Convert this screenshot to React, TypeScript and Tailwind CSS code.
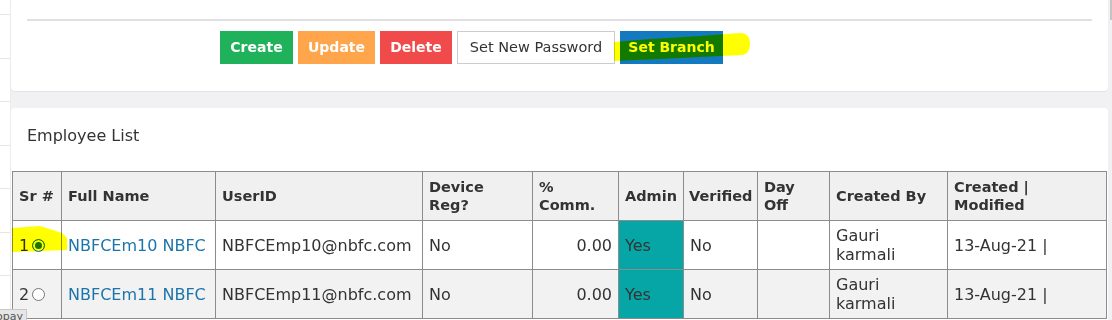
import React from 'react';

type Employee = {
  sr: number;
  fullName: string;
  userId: string;
  deviceReg: string;
  comm: string;
  admin: string;
  verified: string;
  dayOff: string;
  createdBy: [string, string];
  created: string;
};

const employees: Employee[] = [
  {
    sr: 1,
    fullName: 'NBFCEm10 NBFC',
    userId: 'NBFCEmp10@nbfc.com',
    deviceReg: 'No',
    comm: '0.00',
    admin: 'Yes',
    verified: 'No',
    dayOff: '',
    createdBy: ['Gauri', 'karmali'],
    created: '13-Aug-21 |',
  },
  {
    sr: 2,
    fullName: 'NBFCEm11 NBFC',
    userId: 'NBFCEmp11@nbfc.com',
    deviceReg: 'No',
    comm: '0.00',
    admin: 'Yes',
    verified: 'No',
    dayOff: '',
    createdBy: ['Gauri', 'karmali'],
    created: '13-Aug-21 |',
  },
];

const th = 'border border-[#8c8c8c] bg-[#f0f0f0] px-[6px] text-left align-middle font-bold text-[14.5px] leading-[18px] text-[#333]';
const td = 'border border-[#8c8c8c] px-[6px] align-middle text-[16px] leading-[19px]';

function ActionButtons() {
  return (
    <div className="ml-[193px] mt-[10px] flex gap-[5px]">
      <button className="h-[33px] w-[73px] bg-[#1fb25a] text-[14px] font-bold text-white">Create</button>
      <button className="h-[33px] w-[77px] bg-[#ffa64d] text-[14px] font-bold text-white">Update</button>
      <button className="h-[33px] w-[72px] bg-[#f04a4a] text-[14px] font-bold text-white">Delete</button>
      <button className="h-[33px] w-[158px] border border-[#cccccc] bg-white text-[14.5px] text-[#333]">
        Set New Password
      </button>
      <button className="h-[33px] w-[103px] bg-[#137abf] text-[14px] font-bold text-white">Set Branch</button>
    </div>
  );
}

function EmployeeTable() {
  return (
    <table className="ml-[1px] w-[1094px] table-fixed border-collapse">
      <colgroup>
        <col className="w-[49px]" />
        <col className="w-[154px]" />
        <col className="w-[207px]" />
        <col className="w-[110px]" />
        <col className="w-[86px]" />
        <col className="w-[65px]" />
        <col className="w-[74px]" />
        <col className="w-[72px]" />
        <col className="w-[118px]" />
        <col className="w-[159px]" />
      </colgroup>
      <thead>
        <tr className="h-[49px]">
          <th className={th}>Sr #</th>
          <th className={th}>Full Name</th>
          <th className={th}>UserID</th>
          <th className={th}>
            Device
            <br />
            Reg?
          </th>
          <th className={th}>
            %
            <br />
            Comm.
          </th>
          <th className={`${th} whitespace-nowrap`}>Admin</th>
          <th className={`${th} whitespace-nowrap !px-[5px]`}>Verified</th>
          <th className={th}>
            Day
            <br />
            Off
          </th>
          <th className={th}>Created By</th>
          <th className={th}>
            Created |
            <br />
            Modified
          </th>
        </tr>
      </thead>
      <tbody>
        {employees.map((emp, i) => (
          <tr key={emp.sr} className={`h-[49px] ${i % 2 === 1 ? 'bg-[#f2f2f2]' : 'bg-white'}`}>
            <td className={td}>
              <div className="flex items-center">
                <span>{emp.sr}</span>
                <input
                  type="radio"
                  name="emp"
                  defaultChecked={i === 0}
                  className="m-0 ml-[3px] h-[13px] w-[13px] appearance-none rounded-full border border-[#767676] bg-white checked:border-[#1a73e8] checked:bg-[#1a73e8] checked:shadow-[inset_0_0_0_2px_#ffffff]"
                />
              </div>
            </td>
            <td className={`${td} text-[#1b75ab]`}>{emp.fullName}</td>
            <td className={td}>{emp.userId}</td>
            <td className={td}>{emp.deviceReg}</td>
            <td className={`${td} text-right`}>{emp.comm}</td>
            <td className={`${td} bg-[#06a6a6]`}>{emp.admin}</td>
            <td className={td}>{emp.verified}</td>
            <td className={td}>{emp.dayOff}</td>
            <td className={td}>
              {emp.createdBy[0]}
              <br />
              {emp.createdBy[1]}
            </td>
            <td className={td}>{emp.created}</td>
          </tr>
        ))}
      </tbody>
    </table>
  );
}

export default function App() {
  return (
    <div className="relative flex h-[320px] w-[1112px] overflow-hidden bg-white font-['DejaVu_Sans',sans-serif] text-[#333]">
      {/* sidebar peeking in from the left */}
      <div className="flex w-[11px] flex-col border-r border-[#ececec]">
        <div className="h-[16px] border-b border-[#e6e6e6]" />
        {[0, 1, 2, 3, 4, 5, 6].map((n) => (
          <div key={n} className="h-[45px] border-b border-[#e6e6e6]" />
        ))}
      </div>

      <div className="flex flex-1 flex-col bg-[#f1f1f3] pr-[4px]">
        <div className="rounded-b-[4px] bg-white px-[16px] pb-[27px] pt-[19px] shadow-[0_1px_1px_rgba(0,0,0,0.06)]">
          <div className="h-[2px] bg-[#e0e0e2]" />
          <ActionButtons />
        </div>

        <div className="mt-[17px] flex-1 rounded-t-[4px] bg-white">
          <div className="px-[16px] pt-[16px] pb-[23px] text-[16px] leading-[24px]">Employee List</div>
          <EmployeeTable />
        </div>
      </div>

      {/* scrollbar thumb */}
      <div className="absolute right-0 top-0 h-[20px] w-[2px] bg-[#c4c4c4]" />

      {/* highlighter marks */}
      <svg
        className="pointer-events-none absolute left-0 top-0 mix-blend-multiply"
        width="1112"
        height="320"
        viewBox="0 0 1112 320"
      >
        <path
          d="M614 42 L650 39 L700 36 L740 33 Q750 33 750 44 Q750 54 742 55 L700 57 L660 59 L614 61 Z"
          fill="#ffff00"
        />
        <path d="M12 228 L40 226 L62 233 L67 238 L67 250 L40 251 L12 252 Z" fill="#ffff00" />
      </svg>

      {/* browser tooltip remnant */}
      <div className="absolute left-[-8px] top-[309px] h-[16px] border border-[#c8c8c8] bg-[#e6e6e6] px-[3px] text-[11px] leading-[13px] text-[#555]">
        opay
      </div>
    </div>
  );
}
